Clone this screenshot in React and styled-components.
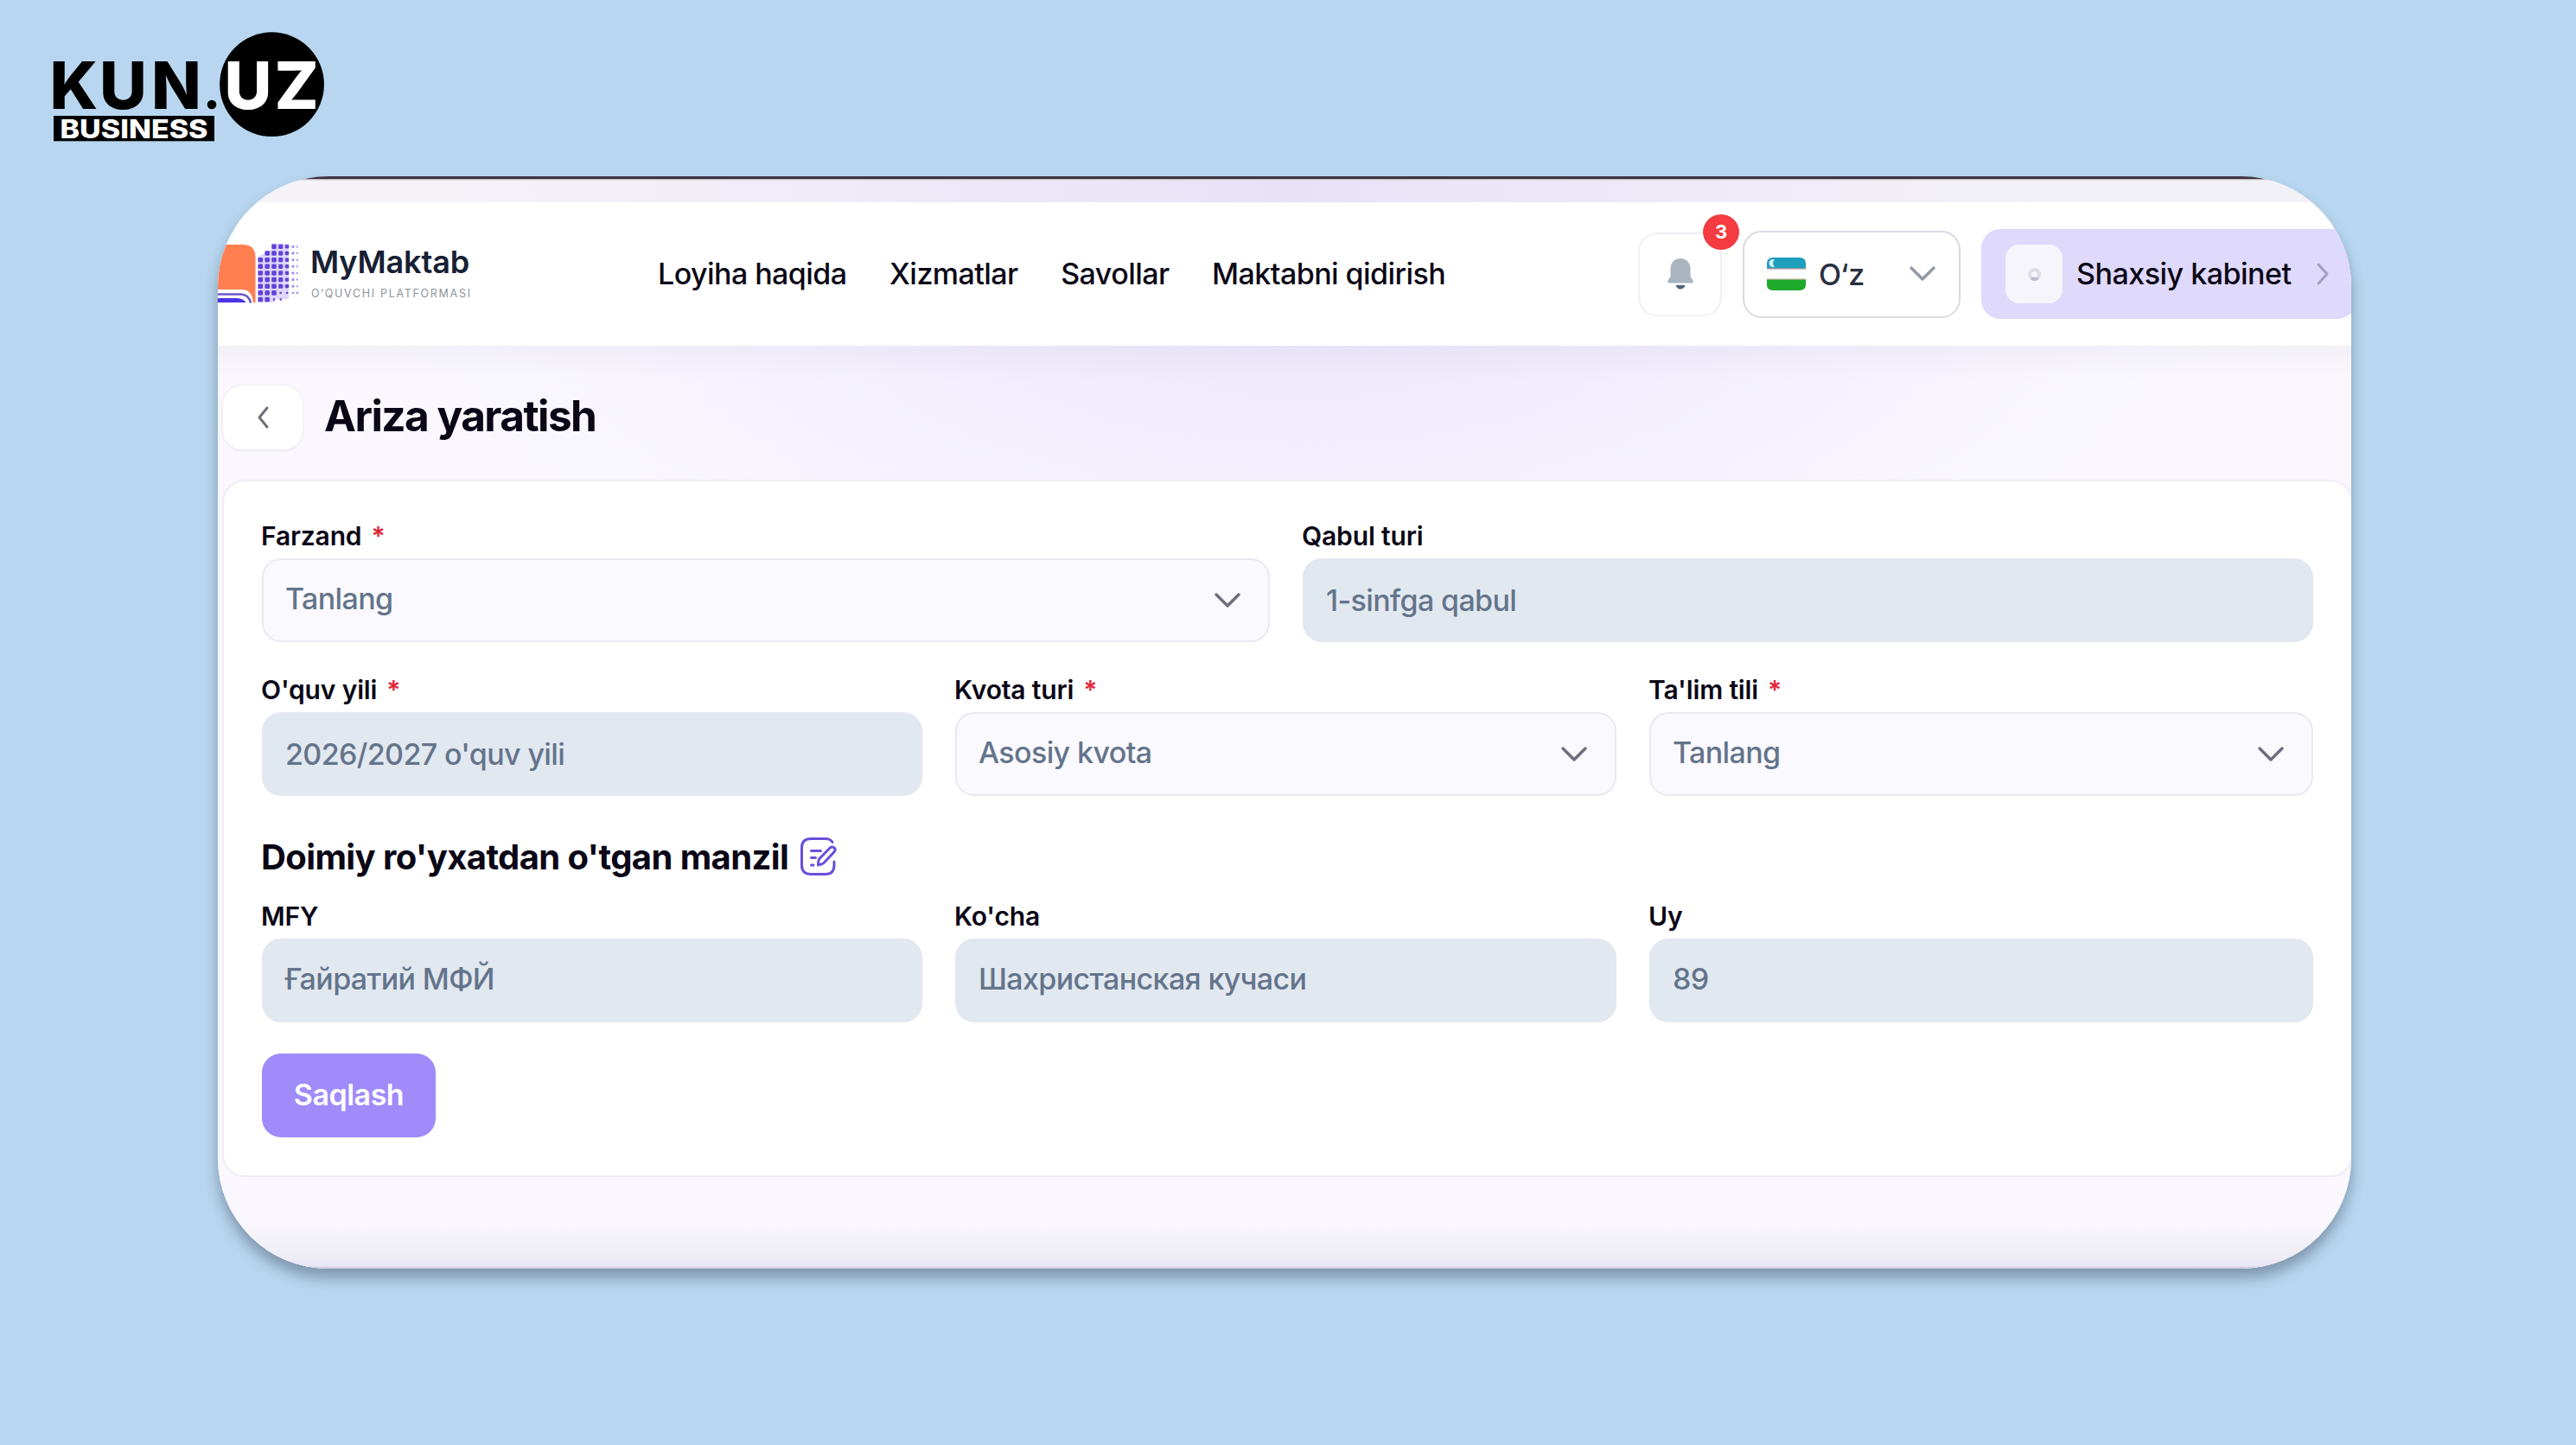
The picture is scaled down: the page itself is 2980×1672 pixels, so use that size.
import React from "react";
import styled, { createGlobalStyle, css } from "styled-components";

const dotRows = [
  [2, 6, 4],
  [1, 6, 4],
  [0, 6, 5],
  [0, 6, 5],
  [0, 6, 5],
  [0, 6, 5],
  [0, 6, 5],
  [0, 6, 2],
  [0, 3, 1],
];
const dotX = [301.3, 309.2, 317, 324.7, 332, 339, 343.8];
const dotSize = [5.6, 5.6, 5.6, 5.2, 4.4, 3, 2];

const GlobalStyle = createGlobalStyle`
  body {
    margin: 0;
    background: #b8d6ef;
  }
  * {
    box-sizing: border-box;
  }
  svg {
    display: block;
    flex: none;
    overflow: visible;
  }
`;

const center = css`
  display: flex;
  align-items: center;
  justify-content: center;
`;

const Page = styled.div`
  width: 2980px;
  height: 1672px;
  padding: 37px 62px 0;
  overflow: hidden;
  background: #b8d6ef;
  font-family: Inter, sans-serif;
  color: #0b0716;
`;

const LogoText = styled.text`
  font: 800 75.500px Inter, sans-serif;
  fill: ${(props) => (props.$white ? "#fff" : "#000")};
`;

const LogoSub = styled.text`
  font: 800 29.500px Inter, sans-serif;
  fill: #fff;
`;

const Window = styled.div`
  width: 2468px;
  height: 1264px;
  margin: 40px 0 0 190px;
  border-radius: 128px;
  overflow: hidden;
  display: flex;
  flex-direction: column;
  background: #faf8fe;
  box-shadow: 0 11px 15px rgba(60, 76, 98, 0.45);
`;

const Strip = styled.div`
  flex: none;
  height: 5px;
  background: linear-gradient(#3d3440 3px, #a9a4ad 3px, #f6f4f9);
`;

const Band = styled.div`
  flex: none;
  height: 25px;
  background: linear-gradient(90deg, #f5f3f8 10%, #e8e2f7 50%, #f3f1f8 85%);
`;

const Header = styled.header`
  flex: none;
  height: 166px;
  display: flex;
  align-items: center;
  background: #fff;
`;

const Brand = styled.div`
  flex: none;
  width: 509px;
  display: flex;
  align-items: center;
`;

const BrandText = styled.div`
  display: flex;
  flex-direction: column;
  margin-left: 9px;
`;

const BrandName = styled.span`
  font-size: 36px;
  font-weight: 600;
  letter-spacing: -0.150px;
  line-height: 40px;
  color: #172033;
`;

const BrandSub = styled.span`
  margin: 10px 0 5px 1px;
  font-size: 12.500px;
  letter-spacing: 1.700px;
  line-height: 14px;
  color: #8d949c;
`;

const Nav = styled.nav`
  flex: none;
  width: 1134px;
  display: flex;
  gap: 49.500px;
  padding-bottom: 1px;
`;

const NavLink = styled.a`
  font-size: 34px;
  font-weight: 500;
  letter-spacing: -0.550px;
  white-space: nowrap;
`;

const Bell = styled.div`
  ${center};
  flex: none;
  position: relative;
  width: 97px;
  height: 97px;
  border: 2px solid #eff0f4;
  border-radius: 22px;
`;

const Badge = styled.span`
  ${center};
  position: absolute;
  top: -23px;
  right: -22px;
  width: 42px;
  height: 41px;
  border-radius: 50%;
  background: #f43b41;
  color: #fff;
  font-size: 22px;
  font-weight: 700;
`;

const Lang = styled.div`
  flex: none;
  display: flex;
  align-items: center;
  width: 252px;
  height: 101px;
  margin-left: 24px;
  padding: 0 27px 0 26px;
  border: 2px solid #d9dae2;
  border-radius: 22px;
`;

const LangName = styled.span`
  flex: 1;
  margin-left: 15px;
  font-size: 34px;
  font-weight: 500;
  color: #2b3040;
`;

const Cabinet = styled.div`
  flex: none;
  display: flex;
  align-items: center;
  width: 434px;
  height: 104px;
  margin-left: 24px;
  padding-left: 28px;
  border-radius: 22px;
  background: #dfd9fc;
`;

const Avatar = styled.div`
  ${center};
  width: 66px;
  height: 68px;
  border-radius: 16px;
  background: #f6f5fc;
`;

const Spinner = styled.div`
  width: 15px;
  height: 15px;
  border-radius: 50%;
  border: 4px solid #dedde8;
  border-bottom-color: #bdbccb;
`;

const CabinetName = styled.span`
  margin: 0 29px 1px 16px;
  font-size: 34px;
  font-weight: 500;
  letter-spacing: -0.500px;
  white-space: nowrap;
`;

const Content = styled.main`
  flex: 1;
  padding: 46px 0 0 5px;
  background: linear-gradient(rgba(50, 40, 70, 0.035), transparent 40px),
    linear-gradient(
      transparent calc(100% - 52px),
      #edebf3 calc(100% - 12px),
      #e9e7f6 calc(100% - 3px),
      #c3bcd6
    ),
    radial-gradient(
      ellipse 1050px 460px at 51% -80px,
      #ebe6fb,
      #f2eefd 45%,
      #f6f3fe 70%,
      #faf8fe
    );
`;

const TitleRow = styled.div`
  display: flex;
  align-items: center;
  height: 73px;
`;

const Back = styled.div`
  ${center};
  width: 92px;
  height: 74px;
  margin-left: 1px;
  border-radius: 22px;
  background: #fff;
  box-shadow: 0 0 0 1.500px #f1eff5, 0 2px 3px rgba(40, 30, 70, 0.08);
`;

const Title = styled.h1`
  margin: 0 0 3px 25px;
  font-size: 49.500px;
  font-weight: 650;
  letter-spacing: -1.550px;
`;

const Form = styled.form`
  width: 2465px;
  height: 807px;
  margin-top: 36px;
  padding: 45px 0 0 44px;
  border: 2px solid #efedf4;
  border-radius: 26px;
  background: #fff;
`;

const Row = styled.div`
  display: grid;
  grid-template-columns: ${(props) => props.$cols};
  column-gap: 38px;
  margin-bottom: 37px;
`;

const FieldBox = styled.div`
  display: flex;
  flex-direction: column;
  gap: 8px;
`;

const Label = styled.label`
  margin-left: -1px;
  font-size: 30px;
  font-weight: 600;
  letter-spacing: -0.150px;
  line-height: 36px;
`;

const Star = styled.span`
  margin-left: 11px;
  color: #e3263a;
`;

const Input = styled.div`
  display: flex;
  align-items: center;
  justify-content: space-between;
  height: 97px;
  padding: 0 32px 0 25px;
  border: 2px solid ${(props) => (props.$select ? "#eae8f0" : "#e3e7ef")};
  border-radius: 22px;
  background: ${(props) => (props.$select ? "#faf9fe" : "#e2e8f0")};
  color: #64748b;
`;

const Value = styled.span`
  padding-bottom: ${(props) => (props.$raised ? 4 : 0)}px;
  font-size: 34px;
  font-weight: 500;
  letter-spacing: -0.620px;
`;

const Section = styled.h2`
  display: flex;
  align-items: center;
  gap: 14px;
  height: 48px;
  margin: 46px 0 27px -1px;
  font-size: 40px;
  font-weight: 650;
  letter-spacing: -0.600px;
`;

const Save = styled.div`
  ${center};
  width: 201px;
  height: 97px;
  margin-top: -1px;
  padding-bottom: 2px;
  border-radius: 22px;
  background: #9f8bf9;
  color: #fff;
  font-size: 34px;
  font-weight: 600;
  letter-spacing: -0.500px;
`;

const KunLogo = () => (
  <svg width="320" height="127" viewBox="62 37 320 127">
    <circle cx="314.5" cy="97.7" r="60.4" />
    <circle cx="245" cy="121" r="5.3" />
    <rect x="62" y="134" width="186" height="29.3" />
    <LogoText x="57.5 115 175" y="126.3">
      KUN
    </LogoText>
    <LogoText $white x="259.5 317.5" y="126.3">
      UZ
    </LogoText>
    <LogoSub x="69.5" y="159.6" textLength="171" lengthAdjust="spacingAndGlyphs">
      BUSINESS
    </LogoSub>
  </svg>
);

const BookLogo = () => (
  <svg width="98" height="70" viewBox="252 283 98 70">
    <path d="M240 284h41q14 0 14.500 14v53h-55z" fill="#ff7f50" />
    <path d="M240 336h41q11 1 12 16h-53z" fill="#fff" />
    <path
      d="M240 341.500h39q9 .5 11 10"
      fill="none"
      stroke="#6f56c9"
      strokeWidth="2.600"
    />
    <path d="M240 346h34q8 .5 10.500 5h-44z" fill="#4c35e6" />
    <path d="M314 283h20v64h-16v4h-20v-53l16-8z" fill="#7c5cff" opacity=".25" />
    {dotRows.map(([from, to, big], row) =>
      dotX.slice(from, to + 1).map((x, i) => {
        const col = from + i;
        const size = row > 6 && col > big ? 2.4 : dotSize[col];
        return (
          <rect
            key={`${row}-${col}`}
            x={x - size / 2}
            y={286.4 + row * 7.64 - size / 2}
            width={size}
            height={size}
            rx={size / 4}
            fill={col > 4 ? "#a48fe8" : "#6243d8"}
          />
        );
      })
    )}
  </svg>
);

const BellIcon = () => (
  <svg width="30" height="36" viewBox="0 0 30 36">
    <path
      d="M15 0C8 0 3.500 5 3.500 12v9L.6 25.500C-.4 27.400.4 28.500 2 28.500h26c1.600 0 2.400-1.100 1.400-3L26.500 21v-9C26.500 5 22 0 15 0z"
      fill="#a9b4be"
    />
    <path d="M9.500 31h11q-1.500 4.500-5.500 4.500t-5.500-4.500z" fill="#526474" />
  </svg>
);

const Flag = () => (
  <svg width="45" height="38" viewBox="0 0 45 38">
    <path d="M0 13V7q0-7 7-7h31q7 0 7 7v6z" fill="#1f9fbb" />
    <path d="M0 12.500h45v1.300H0zM0 24.500h45v1.300H0z" fill="#d9a59c" />
    <path d="M0 25.500v6q0 6.500 7 6.500h31q7 0 7-6.500v-6z" fill="#1faa2c" />
    <path d="M9 2.500a4.500 4.500 0 1 0 0 8 5 5 0 0 1 0-8z" fill="#d8f2f7" />
  </svg>
);

const Chevron = ({ color = "#6f6c7d" }) => (
  <svg width="30" height="18" viewBox="0 0 30 18">
    <path
      d="M2 2l13 13L28 2"
      fill="none"
      stroke={color}
      strokeWidth="3.400"
      strokeLinecap="round"
      strokeLinejoin="round"
    />
  </svg>
);

const SideChevron = ({ left, color }) => (
  <svg width="15" height="26" viewBox="0 0 15 26">
    <path
      d={left ? "M12 2L3 13l9 11" : "M2 2l10 11L2 24"}
      fill="none"
      stroke={color}
      strokeWidth="3"
      strokeLinecap="round"
      strokeLinejoin="round"
    />
  </svg>
);

const EditIcon = () => (
  <svg
    width="43"
    height="44"
    viewBox="0 0 43 44"
    fill="none"
    stroke="#6a4fdc"
    strokeWidth="3"
    strokeLinecap="round"
    strokeLinejoin="round"
  >
    <path d="M37 5.500Q34.500 1.500 29 1.500H12Q1.500 1.500 1.500 12v20q0 10.500 10.500 10.500h17q10 0 10-10.500v-4" />
    <path d="M12.500 15.500h11M12.500 23.500h5M12.500 32h2.500" />
    <path d="M22 24.500L34.200 12q2.500-2 4.800 0t0 4.800L27 29.500q-1.500 1.500-6.500 2.500 0-5.500 1.500-7.500z" />
  </svg>
);

const Field = ({ label, value, required, select, raised }) => (
  <FieldBox>
    <Label>
      {label}
      {required && <Star>*</Star>}
    </Label>
    <Input $select={select}>
      <Value $raised={select || raised}>{value}</Value>
      {select && <Chevron />}
    </Input>
  </FieldBox>
);

export default function App() {
  return (
    <Page>
      <GlobalStyle />
      <KunLogo />
      <Window>
        <Strip />
        <Band />
        <Header>
          <Brand>
            <BookLogo />
            <BrandText>
              <BrandName>MyMaktab</BrandName>
              <BrandSub>O‘QUVCHI PLATFORMASI</BrandSub>
            </BrandText>
          </Brand>
          <Nav>
            <NavLink>Loyiha haqida</NavLink>
            <NavLink>Xizmatlar</NavLink>
            <NavLink>Savollar</NavLink>
            <NavLink>Maktabni qidirish</NavLink>
          </Nav>
          <Bell>
            <BellIcon />
            <Badge>3</Badge>
          </Bell>
          <Lang>
            <Flag />
            <LangName>O‘z</LangName>
            <Chevron color="#9399a6" />
          </Lang>
          <Cabinet>
            <Avatar>
              <Spinner />
            </Avatar>
            <CabinetName>Shaxsiy kabinet</CabinetName>
            <SideChevron color="#a39fbd" />
          </Cabinet>
        </Header>
        <Content>
          <TitleRow>
            <Back>
              <SideChevron left color="#6f6f78" />
            </Back>
            <Title>Ariza yaratish</Title>
          </TitleRow>
          <Form>
            <Row $cols="1166px 1169px">
              <Field label="Farzand" value="Tanlang" required select />
              <Field label="Qabul turi" value="1-sinfga qabul" />
            </Row>
            <Row $cols="764px 765px 768px">
              <Field label="O'quv yili" value="2026/2027 o'quv yili" required />
              <Field label="Kvota turi" value="Asosiy kvota" required select />
              <Field label="Ta'lim tili" value="Tanlang" required select />
            </Row>
            <Section>
              Doimiy ro'yxatdan o'tgan manzil
              <EditIcon />
            </Section>
            <Row $cols="764px 765px 768px">
              <Field label="MFY" value="Ғайратий МФЙ" raised />
              <Field label="Ko'cha" value="Шахристанская кучаси" raised />
              <Field label="Uy" value="89" raised />
            </Row>
            <Save>Saqlash</Save>
          </Form>
        </Content>
      </Window>
    </Page>
  );
}
